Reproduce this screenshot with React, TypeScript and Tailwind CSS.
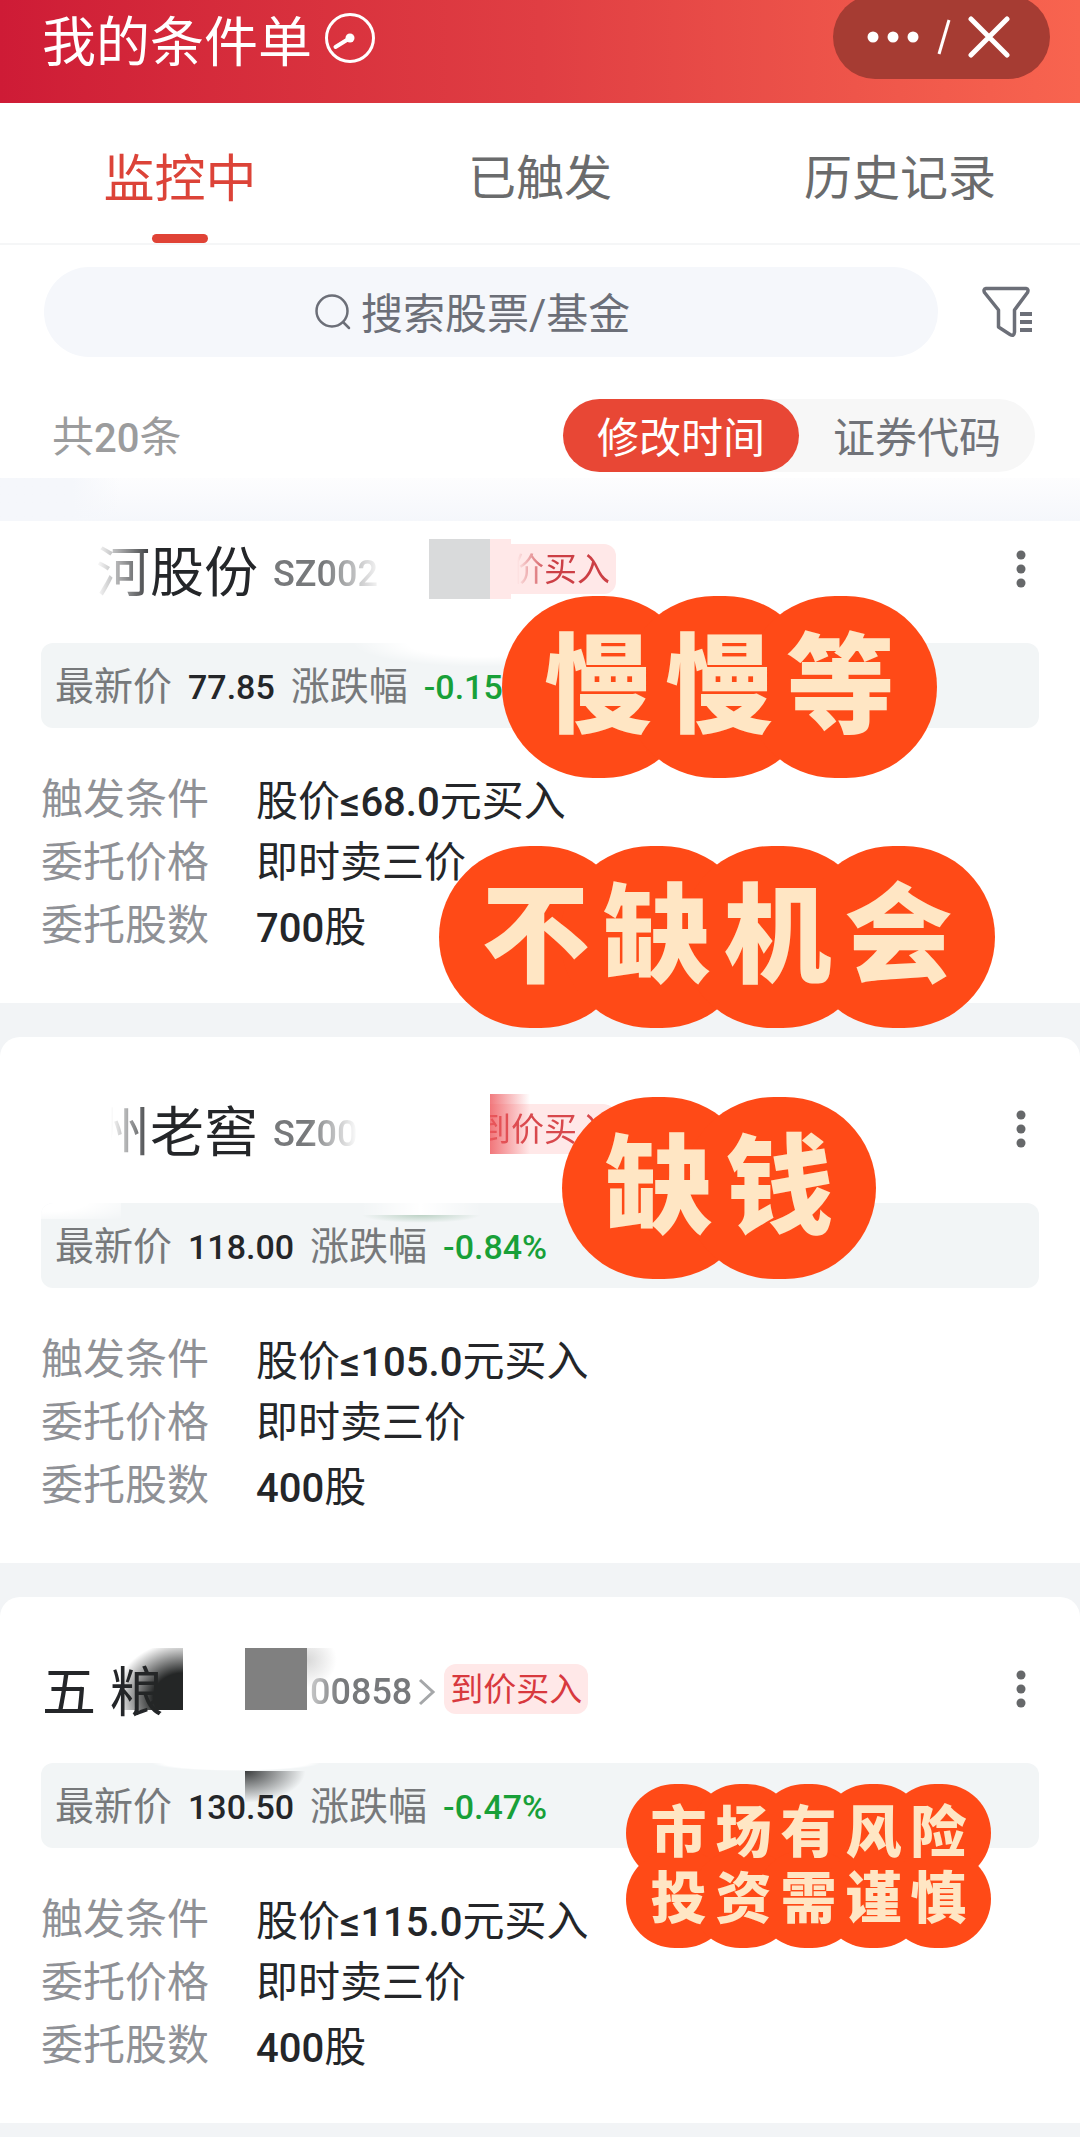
import type { ReactNode } from "react";

const tabs = ["监控中", "已触发", "历史记录"];

type Order = {
  price: string;
  change: string;
  trigger: string;
  entrust: string;
  shares: string;
};

const orders: Order[] = [
  { price: "77.85", change: "-0.15%", trigger: "68.0", entrust: "即时卖三价", shares: "700" },
  { price: "118.00", change: "-0.84%", trigger: "105.0", entrust: "即时卖三价", shares: "400" },
  { price: "130.50", change: "-0.47%", trigger: "115.0", entrust: "即时卖三价", shares: "400" },
];

function GaugeIcon() {
  return (
    <svg className="ml-3 mb-2" width="52" height="52" viewBox="0 0 52 52" fill="none" stroke="currentColor" strokeWidth="3" strokeLinecap="round">
      <circle cx="26" cy="26" r="23.5" />
      <path d="M26 26L11.500 35" strokeWidth="4" />
      <circle cx="26" cy="26" r="4.500" fill="currentColor" stroke="none" />
    </svg>
  );
}

function SearchIcon() {
  return (
    <svg width="36" height="36" viewBox="0 0 36 36" fill="none" stroke="currentColor" strokeWidth="2.500" strokeLinecap="round">
      <circle cx="17" cy="17" r="15.500" />
      <path d="M28.500 28.500L34 34" />
    </svg>
  );
}

function FilterIcon() {
  return (
    <svg width="52" height="52" viewBox="0 0 52 52" fill="none" stroke="currentColor" strokeWidth="3.500" strokeLinejoin="round" strokeLinecap="round">
      <path d="M4 2.500H44Q47 3 45.500 6.500L32.500 24V46Q32 51 28 48.500L16.500 41V24L2.500 6.500Q1 3 4 2.500Z" />
      <path d="M38 28H50M38 36H50M38 44H50" strokeLinecap="butt" strokeWidth="4" />
    </svg>
  );
}

function MoreButton() {
  return (
    <button type="button" aria-label="更多" className="ml-auto mr-[52px] text-[#66686a]">
      <svg width="14" height="40" viewBox="0 0 14 40" fill="currentColor">
        <circle cx="7" cy="6" r="4.500" />
        <circle cx="7" cy="20" r="4.500" />
        <circle cx="7" cy="34" r="4.500" />
      </svg>
    </button>
  );
}

function Sticker({ text }: { text: string }) {
  return (
    <div className="isolate flex px-9 text-[108px] font-black leading-none text-[#ffe6c4]">
      {text.split("").map((char, i) => (
        <span
          key={i}
          className="relative flex h-[182px] w-[121px] items-center justify-center before:absolute before:-inset-x-9 before:inset-y-0 before:-z-10 before:rounded-full before:bg-[#ff4a17]"
        >
          {char}
        </span>
      ))}
    </div>
  );
}

function SmallSticker({ lines }: { lines: string[] }) {
  return (
    <div className="isolate px-5 py-4 text-[56px] font-black leading-none text-[#ffe6c4]">
      {lines.map((line) => (
        <div key={line} className="flex">
          {line.split("").map((char, i) => (
            <span
              key={i}
              className="relative flex h-[66px] w-[65px] items-center justify-center before:absolute before:-inset-x-5 before:-inset-y-4 before:-z-10 before:rounded-full before:bg-[#ff4a17]"
            >
              {char}
            </span>
          ))}
        </div>
      ))}
    </div>
  );
}

function Digits({ children }: { children: ReactNode }) {
  return <span className="text-[40px] font-medium leading-none">{children}</span>;
}

function OrderBody({ order, smudge }: { order: Order; smudge?: ReactNode }) {
  return (
    <>
      <div className="relative mx-[41px] mt-11 flex h-[85px] items-center gap-4 overflow-hidden rounded-xl bg-[#f2f5f6] px-3.5 pt-1 text-[39px] text-[#77797b]">
        {smudge}
        <span className="relative">最新价</span>
        <span className="relative text-[34px] font-medium text-[#242629]">{order.price}</span>
        <span className="relative">涨跌幅</span>
        <span className="relative text-[34px] font-medium text-[#18a038]">{order.change}</span>
      </div>
      <dl className="mt-10 grid auto-rows-[63px] grid-cols-[215px_1fr] items-center px-[41px] pb-[46px] text-[42px] leading-[60px] text-[#242629]">
        <dt className="text-[#8f9196]">触发条件</dt>
        <dd className="pt-1">
          股价<Digits>≤{order.trigger}</Digits>元买入
        </dd>
        <dt className="text-[#8f9196]">委托价格</dt>
        <dd>{order.entrust}</dd>
        <dt className="text-[#8f9196]">委托股数</dt>
        <dd className="pt-1">
          <Digits>{order.shares}</Digits>股
        </dd>
      </dl>
    </>
  );
}

export default function App() {
  return (
    <div className="min-h-screen overflow-x-hidden bg-[#f2f4f6] font-['Roboto','Noto_Sans_CJK_SC',sans-serif]">
      <header className="flex h-[103px] items-center bg-linear-to-r from-[#ce1b36] via-[#e03e43] to-[#f8644f] pl-[42px] pr-[30px] text-white">
        <h1 className="mb-4 text-[54px] leading-none">我的条件单</h1>
        <div className="mb-5">
          <GaugeIcon />
        </div>
        <div className="-mt-[30px] ml-auto flex h-[84px] w-[217px] items-center justify-between rounded-full bg-[#a63c33] pl-[34px] pr-10">
          <button type="button" aria-label="菜单">
            <svg width="52" height="12" viewBox="0 0 52 12" fill="currentColor">
              <circle cx="6" cy="6" r="5.500" />
              <circle cx="26" cy="6" r="5.500" />
              <circle cx="46" cy="6" r="5.500" />
            </svg>
          </button>
          <svg width="14" height="36" viewBox="0 0 14 36" stroke="currentColor" strokeWidth="3">
            <path d="M2 35L12 1" />
          </svg>
          <button type="button" aria-label="关闭">
            <svg width="42" height="42" viewBox="0 0 42 42" stroke="currentColor" strokeWidth="5" strokeLinecap="round">
              <path d="M3 3L39 39M39 3L3 39" />
            </svg>
          </button>
        </div>
      </header>

      <div className="bg-white">
        <nav className="grid h-[142px] grid-cols-3 border-b-2 border-[#f5f6f7]">
          {tabs.map((tab, i) => (
            <button
              key={tab}
              type="button"
              className={
                i === 0
                  ? "relative pt-3 text-[51px] leading-none text-[#dc4338]"
                  : "pt-3 text-[48px] leading-none text-[#6a6b6c]"
              }
            >
              {tab}
              {i === 0 && <span className="absolute bottom-0 left-1/2 h-[9px] w-14 -translate-x-1/2 rounded-full bg-[#e04336]" />}
            </button>
          ))}
        </nav>

        <div className="flex items-center pl-11 pr-[46px] pt-[22px] text-[#6c6f78]">
          <label className="flex h-[90px] flex-1 items-center justify-center gap-2.5 rounded-full bg-[#f5f7fb] pr-9">
            <SearchIcon />
            <input
              type="text"
              aria-label="搜索股票/基金"
              placeholder="搜索股票/基金"
              className="h-16 w-[270px] bg-transparent pt-1 text-[42px] outline-none placeholder:text-[#6c6f78]"
            />
          </label>
          <button type="button" aria-label="筛选" className="ml-11">
            <FilterIcon />
          </button>
        </div>

        <div className="mt-[42px] flex items-center justify-between pb-1.5 pl-[52px] pr-[45px] text-[42px]">
          <span className="pt-1 text-[#9b9c9d]">
            共<span className="text-[40px] font-medium">20</span>条
          </span>
          <div className="flex h-[73px] items-center rounded-full bg-[#f7f7f7] leading-none">
            <button type="button" className="h-full rounded-full bg-[#e84735] px-[34px] pt-1.5 text-white">
              修改时间
            </button>
            <button type="button" className="h-full px-[34px] pt-1.5 text-[#717379]">
              证券代码
            </button>
          </div>
        </div>

        <div className="h-[43px] bg-linear-to-b from-[#fdfdfe] to-[#f5f7fb]">
          <div className="h-full w-[120px] bg-linear-to-r from-[#f5f7fb] from-60% to-transparent" />
        </div>
      </div>

      <main className="flex flex-col gap-[34px]">
        <section className="relative bg-white pt-[18px]">
          <div className="flex h-[60px] items-center">
            <h2 className="ml-24 w-[177px] pt-2.5 text-[54px] leading-none text-[#242629] [mask-image:linear-gradient(to_right,transparent,black_60px)]">
              河股份
            </h2>
            <span className="w-[156px] pt-2.5 text-[36px] font-medium leading-none text-[#77797b] [mask-image:linear-gradient(to_right,black_50px,transparent_110px)]">
              SZ002
            </span>
            <span className="h-[60px] w-[61px] bg-[#d9dadb]" />
            <span className="h-[60px] w-[21px] bg-[#ffe8e8]" />
            <span className="flex h-[50px] items-center rounded-r-xl bg-[#ffe8e8] pr-1.5 text-[33px] leading-none text-[#cc3f45]">
              <span className="[mask-image:linear-gradient(to_right,transparent_6px,black_38px)]">价买入</span>
            </span>
            <MoreButton />
          </div>
          <OrderBody
            order={orders[0]}
            smudge={<span className="absolute left-[310px] top-0 h-6 w-[260px] bg-[radial-gradient(ellipse_at_50%_0%,white_40%,transparent_70%)]" />}
          />
          <div className="absolute left-[502px] top-[75px] z-10">
            <Sticker text="慢慢等" />
          </div>
          <div className="absolute left-[439px] top-[325px] z-10">
            <Sticker text="不缺机会" />
          </div>
        </section>

        <section className="relative rounded-t-[20px] bg-white pt-[62px]">
          <div className="flex h-[60px] items-center">
            <h2 className="ml-24 w-[177px] pt-2.5 text-[54px] leading-none text-[#242629] [mask-image:linear-gradient(to_right,transparent_15px,black_58px)]">
              州老窖
            </h2>
            <span className="w-[199px] pt-2.5 text-[36px] font-medium leading-none text-[#77797b] [mask-image:linear-gradient(to_right,black_35px,transparent_85px)]">
              SZ00
            </span>
            <span className="flex h-[50px] items-center rounded-xl bg-[#ffe8e8] px-1.5 text-[33px] leading-none text-[#d8484c] [mask-image:linear-gradient(to_right,transparent_18px,black_18px)]">
              到价买入
            </span>
            <MoreButton />
          </div>
          <div className="absolute left-[490px] top-[57px] h-[60px] w-10 bg-linear-to-r from-[#ee5a5f]/80 to-transparent" />
          <OrderBody
            order={orders[1]}
            smudge={
              <>
                <span className="absolute left-0 top-0 h-4 w-20 bg-[radial-gradient(ellipse_at_0%_0%,white_40%,transparent_100%)]" />
                <span className="absolute left-[320px] top-3 h-2 w-[120px] bg-[radial-gradient(ellipse_at_50%_0%,#bcd2c5,transparent_70%)]" />
                <span className="absolute left-[320px] top-0 h-3 w-[120px] bg-linear-to-r from-transparent via-white to-transparent" />
              </>
            }
          />
          <div className="absolute left-[562px] top-[60px] z-10">
            <Sticker text="缺钱" />
          </div>
        </section>

        <section className="relative rounded-t-[20px] bg-white pt-[62px]">
          <div className="flex h-[60px] items-center">
            <h2 className="ml-[42px] w-[268px] pt-2.5 text-[54px] leading-none text-[#242629]">五 粮</h2>
            <a href="#000858" className="flex items-center pt-1.5 text-[36px] leading-none text-[#77797b]">
              <span className="font-medium [mask-image:linear-gradient(to_right,#0006,black_30px)]">00858</span>
              <svg className="ml-1.5" width="18" height="28" viewBox="0 0 18 28" fill="none" stroke="#a5a7a9" strokeWidth="3">
                <path d="M2 2L15 14L2 26" />
              </svg>
            </a>
            <span className="ml-2 flex h-[50px] items-center rounded-xl bg-[#ffe8e8] px-1.5 text-[33px] leading-none text-[#d8393e]">
              到价买入
            </span>
            <MoreButton />
          </div>
          {/* smears left by the eraser */}
          <div className="absolute left-[123px] top-[51px] h-[62px] w-[60px] bg-[radial-gradient(ellipse_at_100%_80%,#242626_35%,transparent_80%)]" />
          <div className="absolute left-[245px] top-[51px] h-[62px] w-[62px] bg-[#808080]" />
          <div className="absolute left-[307px] top-[51px] h-[40px] w-[30px] bg-[radial-gradient(ellipse_at_0%_30%,#d8d8d8,transparent_70%)]" />
          <OrderBody
            order={orders[2]}
            smudge={
              <>
                <span className="absolute left-[110px] top-0 h-2 w-[170px] bg-[radial-gradient(ellipse_at_50%_0%,white_60%,transparent_70%)]" />
                <span className="absolute left-[204px] top-2 h-8 w-[61px] bg-[radial-gradient(ellipse_at_0%_0%,#3a3c3d,transparent_70%)]" />
              </>
            }
          />
          <div className="absolute left-[626px] top-[187px] z-10">
            <SmallSticker lines={["市场有风险", "投资需谨慎"]} />
          </div>
        </section>
      </main>
    </div>
  );
}
